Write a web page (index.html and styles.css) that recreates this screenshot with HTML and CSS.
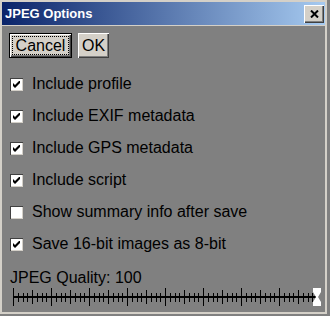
FILE: index.html
```html
<!DOCTYPE html>
<html lang="en">
<head>
    <meta charset="UTF-8">
    <meta name="viewport" content="width=device-width, initial-scale=1.0">
    <link rel="stylesheet" href="styles.css">
</head>
<body>
    <div class="window">
        <div class="titlebar">
            <span class="title">JPEG Options</span>
            <span class="close-btn">
                <svg width="9" height="8" viewBox="0 0 9 8"><path d="M1 0.5 L8 7.5 M8 0.5 L1 7.5" stroke="#000" stroke-width="2"/></svg>
            </span>
        </div>

        <div class="client">
            <div class="buttons">
                <button class="btn btn-default"><span class="focus">Cancel</span></button>
                <button class="btn">OK</button>
            </div>

            <div class="options">
                <label class="option"><span class="check checked"></span>Include profile</label>
                <label class="option"><span class="check checked"></span>Include EXIF metadata</label>
                <label class="option"><span class="check checked"></span>Include GPS metadata</label>
                <label class="option"><span class="check checked"></span>Include script</label>
                <label class="option"><span class="check"></span>Show summary info after save</label>
                <label class="option"><span class="check checked"></span>Save 16-bit images as 8-bit</label>
            </div>

            <div class="quality-label">JPEG Quality: 100</div>
            <svg id="slider" class="slider" width="314" height="20" viewBox="0 0 314 20"></svg>
        </div>
    </div>

    <script>
        // checkmarks
        document.querySelectorAll('.check.checked').forEach(box => {
            box.innerHTML = '<svg width="7" height="7" viewBox="0 0 7 7"><path d="M0 2 L2 4 L6 0 L7 0 L7 2 L2 7 L0 5 Z" fill="#000"/></svg>';
        });

        // slider ticks
        const slider = document.getElementById('slider');
        let parts = '<rect x="3" y="9" width="304" height="2" fill="#000"/>';
        for (let i = 0; i <= 64; i++) {
            const x = 3 + Math.round(i * 4.75);
            let y1 = 6, y2 = 15;
            if (i % 8 === 0) { y1 = 1; y2 = 19; }
            else if (i % 4 === 0) { y1 = 3; y2 = 17; }
            parts += `<rect x="${x}" y="${y1}" width="1" height="${y2 - y1}" fill="#000"/>`;
        }
        parts += '<polygon points="303,1 311,1 311,5 308,10 311,15 311,19 303,19 303,15 306,10 303,5" fill="#fff"/>';
        slider.innerHTML = parts;
    </script>
</body>
</html>
```

FILE: styles.css
```css
body {
    margin: 0;
    background: #808080;
    font-family: "Liberation Sans", Arial, sans-serif;
    font-size: 16px;
    color: #000;
}
.window {
    width: 327px;
    height: 314px;
    box-sizing: border-box;
    border: 2px solid #d4d0c8;
    background: #808080;
    display: flex;
    flex-direction: column;
}
.titlebar {
    height: 23px;
    flex: none;
    display: flex;
    align-items: center;
    justify-content: space-between;
    background: linear-gradient(to right, #0a246a, #a6caf0);
    border-bottom: 1px solid #d4d0c8;
}
.title {
    color: #fff;
    font-weight: bold;
    font-size: 13px;
    padding-left: 3px;
}
.close-btn {
    width: 20px;
    height: 18px;
    margin-right: 1px;
    box-sizing: border-box;
    background: #d4d0c8;
    display: flex;
    align-items: center;
    justify-content: center;
    box-shadow: inset 1px 1px #fff, inset -1px -1px #404040, inset -2px -2px #808080;
}
.client {
    padding-top: 7px;
}
.buttons {
    display: flex;
    gap: 6px;
    padding-left: 7px;
}
.btn {
    height: 25px;
    margin: 0;
    padding: 0;
    border: none;
    background: #d4d0c8;
    font-family: inherit;
    font-size: 16px;
    color: #000;
    display: flex;
    align-items: center;
    justify-content: center;
    box-shadow: inset 1px 1px #fff, inset -1px -1px #404040, inset -2px -2px #808080;
    width: 31px;
}
.btn-default {
    width: 63px;
    border: 1px solid #000;
    box-sizing: border-box;
}
.focus {
    border: 1px dotted #000;
    padding: 0 3px;
    line-height: 17px;
}
.options {
    margin-top: 10px;
    padding-left: 8px;
}
.option {
    height: 32px;
    display: flex;
    align-items: center;
    gap: 9px;
}
.check {
    width: 13px;
    height: 13px;
    box-sizing: border-box;
    background: #fff;
    box-shadow: inset 1px 1px #404040, inset -1px -1px #d4d0c8;
    display: flex;
    align-items: center;
    justify-content: center;
}
.check svg {
    display: block;
}
.quality-label {
    margin-top: 9px;
    padding-left: 8px;
    line-height: 18px;
}
.slider {
    display: block;
    margin-left: 8px;
}
```
